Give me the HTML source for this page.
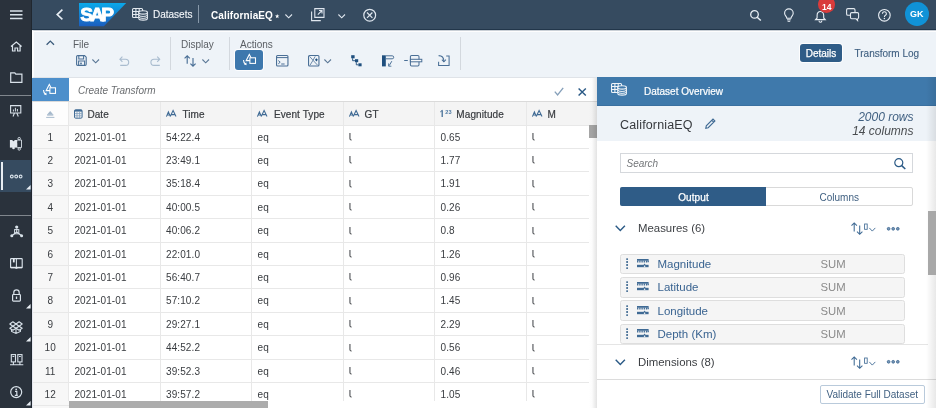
<!DOCTYPE html>
<html><head><meta charset="utf-8">
<style>
*{box-sizing:border-box;}
html,body{margin:0;padding:0;}
body{width:936px;height:408px;overflow:hidden;position:relative;background:#fff;font-family:"Liberation Sans",sans-serif;color:#32363a;}
.a{position:absolute;}
.t{position:absolute;white-space:nowrap;line-height:1;}
svg{position:absolute;overflow:visible;}
#side{left:0;top:0;width:32px;height:408px;background:#2a323c;}
#shell{left:32px;top:0;width:904px;height:30px;background:#364b60;border-bottom:1px solid #22364a;}
#tb{left:32px;top:30px;width:904px;height:48px;background:#eef3f8;border-top:1px solid #c9cfd6;border-left:2px solid #fbfcfd;border-bottom:1px solid #dfe3e8;box-shadow:inset 0 1px 0 #fdfdfe;}
.lbl{font-size:10px;color:#5a5e63;}
.sep{position:absolute;width:1px;background:#d3d8de;}
.cell{position:absolute;font-size:10px;color:#393c40;letter-spacing:0.1px;}
</style></head><body>
<div id="root" class="a" style="left:0;top:0;width:936px;height:408px;overflow:hidden;background:#fff;will-change:transform">

<!-- SIDEBAR -->
<div id="side" class="a"></div>
<div class="a" style="left:31px;top:0;width:1px;height:408px;background:#20272f"></div>
<div class="a" style="left:0;top:95px;width:31px;height:1px;background:#80868d"></div>
<div class="a" style="left:0;top:215px;width:31px;height:1px;background:#80868d"></div>
<div class="a" style="left:0;top:160px;width:31px;height:31.6px;background:#364b60"></div>
<div class="a" style="left:1.2px;top:162px;width:1.5px;height:27.5px;background:#e8eef4"></div>
<!-- hamburger -->
<svg style="left:10px;top:10px" width="13" height="10"><path d="M0 1h12.5M0 4.8h12.5M0 8.6h12.5" stroke="#d9e2ea" stroke-width="1.5"/></svg>
<!-- home -->
<svg style="left:10px;top:41px" width="13" height="11"><path d="M1 5.5L6.3 1 11.6 5.5M2.5 4.5V10H5V7h2.6v3h2.5V4.5" fill="none" stroke="#d9e2ea" stroke-width="1.2"/></svg>
<!-- folder -->
<svg style="left:10px;top:72px" width="13" height="11"><path d="M0.7 0.8H4.8L5.8 2.2H11.9V10.3H0.7Z" fill="none" stroke="#d9e2ea" stroke-width="1.2"/></svg>
<!-- presentation -->
<svg style="left:10px;top:105px" width="12" height="12"><path d="M0.6 0.6H10.8V8H0.6ZM3 11.5L4.5 8M8.3 11.5L6.8 8" fill="none" stroke="#d9e2ea" stroke-width="1.1"/><path d="M3.4 6.5V4.5M5.4 6.5V2.8M7.4 6.5V4" stroke="#d9e2ea" stroke-width="1"/></svg>
<!-- puzzle -->
<svg style="left:9px;top:137px" width="14" height="14"><rect x="0.9" y="3" width="7.4" height="7.6" fill="#e3e9ef"/><circle cx="4.5" cy="3.1" r="1.1" fill="#2a323c"/><circle cx="4.5" cy="11" r="1.3" fill="#e3e9ef"/><path d="M8.3 3H12.5V10.6H8.3" fill="none" stroke="#d9e2ea" stroke-width="0.9"/><circle cx="10.2" cy="1.6" r="1.2" fill="none" stroke="#d9e2ea" stroke-width="0.9"/><circle cx="10.2" cy="12" r="1.2" fill="none" stroke="#d9e2ea" stroke-width="0.9"/><rect x="8.6" y="4.5" width="1.6" height="1.6" fill="#2a323c"/><rect x="10" y="7.2" width="1.6" height="1.6" fill="#2a323c"/></svg>
<!-- ellipsis -->
<svg style="left:10px;top:173.5px" width="13" height="6"><circle cx="1.8" cy="2.5" r="1.4" fill="none" stroke="#d9e2ea" stroke-width="1.1"/><circle cx="6.2" cy="2.5" r="1.4" fill="none" stroke="#d9e2ea" stroke-width="1.1"/><circle cx="10.6" cy="2.5" r="1.4" fill="none" stroke="#d9e2ea" stroke-width="1.1"/></svg>
<svg style="left:25.5px;top:184.8px" width="5" height="5"><path d="M4.6 0V4.6H0Z" fill="#e8eef4"/></svg>
<!-- network -->
<svg style="left:9.5px;top:224.8px" width="14" height="13"><circle cx="6.7" cy="2" r="1.6" fill="#d9e2ea"/><circle cx="1.8" cy="10.8" r="1.5" fill="#d9e2ea"/><circle cx="11.6" cy="10.8" r="1.5" fill="#d9e2ea"/><path d="M6.7 3.5V7M6.7 7L1.8 10.8M6.7 7L11.6 10.8" stroke="#d9e2ea" stroke-width="1.1"/><rect x="4.6" y="4.6" width="4.2" height="4.2" fill="none" stroke="#d9e2ea" stroke-width="1"/></svg>
<!-- book -->
<svg style="left:9.5px;top:257.5px" width="13" height="11"><rect x="0.6" y="0.6" width="11.6" height="9" rx="0.6" fill="none" stroke="#d9e2ea" stroke-width="1.15"/><path d="M6.4 0.6V9.6" stroke="#d9e2ea" stroke-width="1.05"/><path d="M0.6 9.5H12.2" stroke="#e3e9ef" stroke-width="1.4"/><rect x="2.9" y="0.6" width="1.8" height="3.8" fill="#e8eef4"/><path d="M5.4 10.4H7.4" stroke="#d9e2ea" stroke-width="0.9"/></svg>
<!-- lock -->
<svg style="left:11.5px;top:288.5px" width="9" height="13"><path d="M1.8 5.5V3.5a2.7 2.7 0 0 1 5.4 0V5.5" fill="none" stroke="#d9e2ea" stroke-width="1.2"/><rect x="0.6" y="5.5" width="7.8" height="6.6" rx="0.8" fill="none" stroke="#d9e2ea" stroke-width="1.2"/><path d="M4.5 7.5V10" stroke="#d9e2ea" stroke-width="1.3"/></svg>
<svg style="left:26px;top:303.5px" width="5" height="5"><path d="M4.6 0V4.6H0Z" fill="#e8eef4"/></svg>
<!-- box -->
<svg style="left:9px;top:320.5px" width="14" height="13"><path d="M0.8 3L3.9 0.8 7 3 10.1 0.8 13.2 3 10.1 5.2 13.2 7.2 10.1 9.2 7 7.2 3.9 9.2 0.8 7.2 3.9 5.2Z M3.9 5.2L7 3 10.1 5.2 7 7.2Z" fill="none" stroke="#d9e2ea" stroke-width="1.1" stroke-linejoin="round"/><path d="M2.6 8.4V10.4L7 12.5 11.4 10.4V8.4M7 7.2V12.5" fill="none" stroke="#d9e2ea" stroke-width="1.1"/></svg>
<svg style="left:26px;top:336.5px" width="5" height="5"><path d="M4.6 0V4.6H0Z" fill="#e8eef4"/></svg>
<!-- server -->
<svg style="left:9.5px;top:354px" width="14" height="12"><rect x="1.3" y="0.6" width="4.2" height="7.3" fill="none" stroke="#d9e2ea" stroke-width="1.1"/><rect x="7.8" y="0.6" width="4.2" height="7.3" fill="none" stroke="#d9e2ea" stroke-width="1.1"/><path d="M2.5 2.5h1.8M9 2.5h1.8M3.4 8V10.5M9.9 8V10.5M0 10.8H13.3" stroke="#d9e2ea" stroke-width="1.1"/></svg>
<!-- info -->
<svg style="left:10px;top:386px" width="13" height="13"><circle cx="6.2" cy="6.1" r="5.5" fill="none" stroke="#d9e2ea" stroke-width="1.2"/><circle cx="6.2" cy="3.3" r="0.9" fill="#d9e2ea"/><path d="M5 5.3H6.8V9.3M4.8 9.3H7.8" fill="none" stroke="#d9e2ea" stroke-width="1.2"/></svg>
<svg style="left:26px;top:400.5px" width="5" height="5"><path d="M4.6 0V4.6H0Z" fill="#e8eef4"/></svg>

<!-- SHELL BAR -->
<div id="shell" class="a"></div>
<svg style="left:56.3px;top:9.2px" width="8" height="12"><path d="M6.4 0.7L1.2 5.55 6.4 10.4" fill="none" stroke="#e8eef4" stroke-width="1.6"/></svg>
<svg style="left:79px;top:2.7px" width="48" height="24"><defs><linearGradient id="sapg" x1="0" y1="0" x2="0" y2="1"><stop offset="0" stop-color="#0aa9ea"/><stop offset="1" stop-color="#1b5ebf"/></linearGradient></defs><path d="M0 0H47.2L24.9 23.2H0Z" fill="url(#sapg)"/><text x="1.2" y="18.2" font-family="Liberation Sans" font-weight="bold" font-size="19.2" fill="#fff" stroke="#fff" stroke-width="0.9" letter-spacing="-2.8">SAP</text></svg>
<!-- datasets icon -->
<svg style="left:131.5px;top:7.5px" width="17" height="13"><rect x="0.55" y="0.55" width="10" height="9" rx="1" fill="none" stroke="#e3e9ef" stroke-width="1.1"/><path d="M3.9 0.6V9.5M7.2 0.6V9.5M0.6 3.5H10.5M0.6 6.5H10.5" stroke="#e3e9ef" stroke-width="1.1"/><path d="M6.8 4.4V10.4A4.3 1.7 0 0 0 15.4 10.4V4.4Z" fill="#364b60" stroke="#e3e9ef" stroke-width="1.1"/><ellipse cx="11.1" cy="4.4" rx="4.3" ry="1.7" fill="#364b60" stroke="#e3e9ef" stroke-width="1.1"/><path d="M6.8 6.8A4.3 1.7 0 0 0 15.4 6.8M6.8 8.7A4.3 1.7 0 0 0 15.4 8.7" fill="none" stroke="#e3e9ef" stroke-width="1"/></svg>
<div class="t" style="left:153px;top:10px;font-size:10px;color:#f4f7fa;-webkit-text-stroke:0.12px #f4f7fa">Datasets</div>
<div class="a" style="left:198px;top:5px;width:1px;height:18px;background:#8899aa"></div>
<div class="t" style="left:211px;top:10.5px;font-size:10px;font-weight:bold;color:#fff;letter-spacing:0.12px">CaliforniaEQ</div>
<svg style="left:274.5px;top:13.8px" width="5" height="5"><path d="M2.2 0L2.8 1.6 4.4 1.6 3.1 2.6 3.6 4.2 2.2 3.2 0.8 4.2 1.3 2.6 0 1.6 1.6 1.6Z" fill="#fff"/></svg>
<svg style="left:285px;top:14px" width="8" height="5"><path d="M0.4 0.5L3.7 3.8 7 0.5" fill="none" stroke="#dfe6ee" stroke-width="1.1"/></svg>
<svg style="left:310.5px;top:8px" width="14" height="14"><path d="M3.8 0.6H13V9.4H3.8Z" fill="none" stroke="#dfe6ee" stroke-width="1.1"/><path d="M0.6 3.6V12.6H9.8" fill="none" stroke="#dfe6ee" stroke-width="1.1"/><path d="M6.8 6.6L11 2.5M8 2.5H11V5.5" fill="none" stroke="#dfe6ee" stroke-width="1.1"/></svg>
<svg style="left:337.5px;top:14px" width="8" height="5"><path d="M0.4 0.5L3.7 3.8 7 0.5" fill="none" stroke="#dfe6ee" stroke-width="1.1"/></svg>
<svg style="left:363px;top:9px" width="14" height="14"><circle cx="6.7" cy="6.2" r="5.9" fill="none" stroke="#dfe6ee" stroke-width="1.2"/><path d="M4 3.5L9.4 8.9M9.4 3.5L4 8.9" stroke="#dfe6ee" stroke-width="1.2"/></svg>
<!-- right icons -->
<svg style="left:750px;top:10px" width="12" height="11"><circle cx="4.5" cy="4.4" r="3.8" fill="none" stroke="#e8eef4" stroke-width="1.3"/><path d="M7.2 7.2L10.8 10.5" stroke="#e8eef4" stroke-width="1.5"/></svg>
<svg style="left:783.5px;top:8.5px" width="10" height="13"><path d="M2.8 9.3C2.8 7.5 0.6 6.6 0.6 4.2a4.3 4.3 0 0 1 8.6 0C9.2 6.6 7 7.5 7 9.3Z" fill="none" stroke="#e8eef4" stroke-width="1.1"/><path d="M3 10.8H6.8M3.6 12.3H6.2" stroke="#e8eef4" stroke-width="1"/></svg>
<svg style="left:815px;top:9.5px" width="12" height="12"><path d="M5.4 1.5C3 1.5 2.1 3.5 2.1 5.6V8L0.6 9.6H10.2L8.7 8V5.6C8.7 3.5 7.8 1.5 5.4 1.5ZM4 10.8a1.4 1.4 0 0 0 2.8 0" fill="none" stroke="#e8eef4" stroke-width="1.1"/></svg>
<div class="a" style="left:817.6px;top:-4.3px;width:17.6px;height:17.1px;border-radius:50%;background:#d93b3b"></div>
<div class="t" style="left:818px;top:2.5px;width:17.5px;text-align:center;font-size:8.5px;font-weight:bold;color:#fff">14</div>
<svg style="left:846px;top:8px" width="14" height="14"><rect x="0.6" y="0.6" width="8.4" height="6.6" rx="1.3" fill="none" stroke="#e3e9ef" stroke-width="1.1"/><path d="M5.7 4.6H11.4a1.2 1.2 0 0 1 1.2 1.2V9.6a1.2 1.2 0 0 1-1.2 1.2H11.5L11.6 12.5 10 10.8H5.7a1.2 1.2 0 0 1-1.2-1.2V5.8a1.2 1.2 0 0 1 1.2-1.2Z" fill="#364b60" stroke="#e3e9ef" stroke-width="1.1"/></svg>
<svg style="left:878px;top:9px" width="14" height="13"><circle cx="6.4" cy="6.3" r="5.8" fill="none" stroke="#e8eef4" stroke-width="1.1"/><path d="M4.4 4.8a2 2 0 1 1 2.8 1.8c-.6.3-.8.7-.8 1.4" fill="none" stroke="#e8eef4" stroke-width="1.1"/><circle cx="6.4" cy="9.6" r="0.75" fill="#e8eef4"/></svg>
<div class="a" style="left:904.9px;top:2.4px;width:23.8px;height:23.8px;border-radius:50%;background:#1092d7"></div>
<div class="t" style="left:904.9px;top:10.4px;width:23.8px;text-align:center;font-size:9px;font-weight:bold;color:#fff">GK</div>

<!-- TOOLBAR -->
<div id="tb" class="a"></div>
<svg style="left:45.8px;top:39.8px" width="9" height="6"><path d="M0.6 4.8L4.3 1.1 8 4.8" fill="none" stroke="#3a5a7a" stroke-width="1.3"/></svg>
<div class="t lbl" style="left:73px;top:40px">File</div>
<svg style="left:76px;top:55px" width="11" height="11"><path d="M1.7 0.6H8.6L10.2 2.2V9.3a1.1 1.1 0 0 1-1.1 1.1H1.7a1.1 1.1 0 0 1-1.1-1.1V1.7a1.1 1.1 0 0 1 1.1-1.1Z" fill="none" stroke="#4a6f96" stroke-width="1.1"/><path d="M2.8 0.8V4H7.6V0.8M2.6 10.2V6H8.6V10.2" fill="none" stroke="#4a6f96" stroke-width="1.05"/><rect x="4.2" y="7.6" width="1.6" height="1.8" fill="#4a6f96"/></svg>
<svg style="left:92px;top:58.5px" width="8" height="5"><path d="M0.4 0.5L3.7 3.8 7 0.5" fill="none" stroke="#5b7896" stroke-width="1.1"/></svg>
<svg style="left:119px;top:55.5px" width="11" height="11"><path d="M3.4 0.6L0.9 3.2 3.4 5.8M0.9 3.2H6.6a3.1 3.1 0 0 1 0 6.2H1.2" fill="none" stroke="#a9bccf" stroke-width="1.1"/></svg>
<svg style="left:149.5px;top:55.5px" width="11" height="11"><path d="M7.2 0.6L9.7 3.2 7.2 5.8M9.7 3.2H4a3.1 3.1 0 0 0 0 6.2H9.8" fill="none" stroke="#a9bccf" stroke-width="1.1"/></svg>
<div class="sep" style="left:170px;top:37px;height:33px"></div>
<div class="t lbl" style="left:181px;top:40px">Display</div>
<svg style="left:184px;top:54.5px" width="13" height="12"><path d="M3.2 8.8V0.8M0.6 3.4L3.2 0.8 5.8 3.4M9 3V11.2M6.4 8.6L9 11.2 11.6 8.6" fill="none" stroke="#4a6f96" stroke-width="1.15"/></svg>
<svg style="left:201.5px;top:58.5px" width="8" height="5"><path d="M0.4 0.5L3.7 3.8 7 0.5" fill="none" stroke="#5b7896" stroke-width="1.1"/></svg>
<div class="sep" style="left:229px;top:37px;height:33px"></div>
<div class="t lbl" style="left:240px;top:40px">Actions</div>
<div class="a" style="left:235.2px;top:50.2px;width:27.6px;height:20px;border-radius:3px;background:#3d78ad;box-shadow:0 0 0 1px #fdfdfe"></div>
<svg style="left:242px;top:54px" width="14" height="13"><path d="M4.2 6.6L7.3 0.4 10.6 6.6Z" fill="none" stroke="#fff" stroke-width="1.05"/><rect x="7.9" y="3.8" width="5.6" height="5.6" fill="#3d78ad" stroke="#fff" stroke-width="1.05"/><path d="M1.5 6C1.5 7.8 2.2 9.3 3.6 10.2" fill="none" stroke="#fff" stroke-width="1.1"/><path d="M1.8 10.3L4.6 11.2 4.4 8.4Z" fill="#fff"/></svg>
<svg style="left:275.5px;top:54.5px" width="13" height="12"><rect x="0.55" y="0.55" width="11.4" height="10.4" rx="1" fill="none" stroke="#4a6f96" stroke-width="1.1"/><path d="M0.6 2.6H12M2.3 5.6L4.2 7.2 2.3 8.8M5.2 9H8.6" fill="none" stroke="#4a6f96" stroke-width="1"/></svg>
<svg style="left:307.5px;top:54.5px" width="12" height="12"><rect x="0.55" y="0.55" width="10.4" height="10.4" rx="1" fill="none" stroke="#4a6f96" stroke-width="1.1"/><path d="M1.6 1.4L5 5.3 2 10.2M5 5.3L7.2 1.4M5 5.3L9.6 10.2" fill="none" stroke="#4a6f96" stroke-width="0.8"/><path d="M8.4 3.2L9.8 4.8 8.4 6.4 7 4.8Z" fill="#1f4f7e"/></svg>
<svg style="left:324px;top:58.5px" width="8" height="5"><path d="M0.4 0.5L3.7 3.8 7 0.5" fill="none" stroke="#5b7896" stroke-width="1.1"/></svg>
<svg style="left:351px;top:54.7px" width="12" height="12"><rect x="0.2" y="0.2" width="3.4" height="3.1" fill="#1f4f7e"/><rect x="4" y="4.2" width="3.2" height="3" fill="#1f4f7e"/><rect x="7.4" y="8.3" width="3.2" height="3" fill="#1f4f7e"/><path d="M1.6 3.2V5.7H4M5.3 7.1V9.8H7.4" fill="none" stroke="#1f4f7e" stroke-width="0.9"/></svg>
<svg style="left:382px;top:54.5px" width="12" height="12"><rect x="0" y="0.3" width="3.8" height="11.1" fill="#1f4f7e"/><path d="M3.8 0.8H10.2a1.5 1.5 0 0 1 0 3H3.8" fill="none" stroke="#4a6f96" stroke-width="1"/><path d="M9.8 6.2L7.2 10.6" fill="none" stroke="#4a6f96" stroke-width="1"/><path d="M6.6 8.4V11.2H9.4" fill="none" stroke="#4a6f96" stroke-width="0.9"/></svg>
<svg style="left:404px;top:55px" width="19" height="12"><path d="M0.2 5.5H3.8" stroke="#4a6f96" stroke-width="1"/><rect x="6.4" y="0.5" width="8.6" height="10.4" rx="1.2" fill="none" stroke="#4a6f96" stroke-width="1.05"/><rect x="6.4" y="4.3" width="11.4" height="2.5" fill="#f6f8fb" stroke="#4a6f96" stroke-width="1"/></svg>
<svg style="left:438.3px;top:55px" width="13" height="12"><path d="M0.6 6.8V10.5H11.1V1H8.2" fill="none" stroke="#4a6f96" stroke-width="1.05"/><path d="M0.6 0.6C3.6 0.6 5.8 2.6 5.9 6.3" fill="none" stroke="#4a6f96" stroke-width="1.05"/><path d="M3.9 4.6L5.9 6.8 7.9 4.6" fill="none" stroke="#4a6f96" stroke-width="1.05"/></svg>
<div class="sep" style="left:460px;top:37px;height:33px"></div>
<div class="a" style="left:799.7px;top:43.7px;width:42.6px;height:18.8px;border-radius:3px;background:#2f5c87;box-shadow:0 0 0 1px #fdfdfe"></div>
<div class="t" style="left:799.5px;top:49px;width:43px;text-align:center;font-size:10px;color:#fff;-webkit-text-stroke:0.25px #fff">Details</div>
<div class="t" style="left:854.5px;top:49px;font-size:10px;color:#3f5f80;-webkit-text-stroke:0.12px #3f5f80">Transform Log</div>

<!-- CREATE TRANSFORM BAR -->
<div class="a" style="left:32px;top:78px;width:565px;height:24px;background:#fff;border-bottom:1px solid #dadada"></div>
<div class="a" style="left:32px;top:78px;width:36.6px;height:23.4px;background:#4d8fcb"></div>
<svg style="left:42px;top:84px" width="14" height="13"><path d="M4.2 6.6L7.3 0.4 10.6 6.6Z" fill="none" stroke="#fff" stroke-width="1.05"/><rect x="7.9" y="3.8" width="5.6" height="5.6" fill="#4d8fcb" stroke="#fff" stroke-width="1.05"/><path d="M1.5 6C1.5 7.8 2.2 9.3 3.6 10.2" fill="none" stroke="#fff" stroke-width="1.1"/><path d="M1.8 10.3L4.6 11.2 4.4 8.4Z" fill="#fff"/></svg>
<div class="t" style="left:78px;top:85.5px;font-size:10px;font-style:italic;color:#6a6d70">Create Transform</div>
<svg style="left:553.5px;top:87px" width="10" height="10"><path d="M0.8 4.6L3.6 8 9.2 0.8" fill="none" stroke="#86a0ba" stroke-width="1.35"/></svg>
<svg style="left:577.8px;top:87.5px" width="10" height="9"><path d="M0.6 0.6L7.8 7.6M7.8 0.6L0.6 7.6" fill="none" stroke="#2b5a86" stroke-width="1.45"/></svg>

<!-- TABLE -->
<div class="a" style="left:32px;top:101.5px;width:565px;height:23.5px;background:#f4f4f4"></div>
<div class="a" style="left:32px;top:101.5px;width:36.4px;height:23.5px;background:#fdfdfd"></div>
<div class="a" style="left:32px;top:125.0px;width:36.5px;height:283.0px;background:#f7f7f7"></div>
<div class="a" style="left:32px;top:124.50px;width:557px;height:1px;background:#e8e8e8"></div>
<div class="a" style="left:32px;top:147.90px;width:557px;height:1px;background:#e8e8e8"></div>
<div class="a" style="left:32px;top:171.30px;width:557px;height:1px;background:#e8e8e8"></div>
<div class="a" style="left:32px;top:194.70px;width:557px;height:1px;background:#e8e8e8"></div>
<div class="a" style="left:32px;top:218.10px;width:557px;height:1px;background:#e8e8e8"></div>
<div class="a" style="left:32px;top:241.50px;width:557px;height:1px;background:#e8e8e8"></div>
<div class="a" style="left:32px;top:264.90px;width:557px;height:1px;background:#e8e8e8"></div>
<div class="a" style="left:32px;top:288.30px;width:557px;height:1px;background:#e8e8e8"></div>
<div class="a" style="left:32px;top:311.70px;width:557px;height:1px;background:#e8e8e8"></div>
<div class="a" style="left:32px;top:335.10px;width:557px;height:1px;background:#e8e8e8"></div>
<div class="a" style="left:32px;top:358.50px;width:557px;height:1px;background:#e8e8e8"></div>
<div class="a" style="left:32px;top:381.90px;width:557px;height:1px;background:#e8e8e8"></div>
<div class="a" style="left:32px;top:405.30px;width:557px;height:1px;background:#e8e8e8"></div>
<div class="a" style="left:67.90px;top:101.5px;width:1px;height:299.5px;background:#e8e8e8"></div>
<div class="a" style="left:159.50px;top:101.5px;width:1px;height:299.5px;background:#e8e8e8"></div>
<div class="a" style="left:251.00px;top:101.5px;width:1px;height:299.5px;background:#e8e8e8"></div>
<div class="a" style="left:342.50px;top:101.5px;width:1px;height:299.5px;background:#e8e8e8"></div>
<div class="a" style="left:434.00px;top:101.5px;width:1px;height:299.5px;background:#e8e8e8"></div>
<div class="a" style="left:525.50px;top:101.5px;width:1px;height:299.5px;background:#e8e8e8"></div>
<svg style="left:45.8px;top:111px" width="9" height="8"><path d="M4.2 0L7 3.2H1.4Z" fill="#a6b9cc"/><path d="M1.1 3.9H7.3" stroke="#a6b9cc" stroke-width="1.4"/><path d="M0.2 6.4H8.4" stroke="#9fb3c7" stroke-width="0.9"/></svg>
<svg style="left:74.2px;top:109.3px" width="9" height="10"><rect x="0.5" y="0.8" width="7.6" height="8.4" rx="1.2" fill="none" stroke="#3f6a94" stroke-width="1"/><path d="M0.6 0.8H8V2.6H0.6Z" fill="#3f6a94"/><path d="M0.8 4.6H7.8M0.8 6.8H7.8M3 2.8V9M5.6 2.8V9" stroke="#7f9dbb" stroke-width="0.8"/></svg>
<div class="t cell" style="left:87.4px;top:109.8px;-webkit-text-stroke:0.2px #393c40">Date</div>
<svg style="left:165.6px;top:110px" width="11" height="7"><path d="M0.4 6.6L2.4 1.8 4.4 6.6M1.2 4.9H3.6M4.2 6.6L7.1 0.5 10 6.6M5.3 4.6H8.9" fill="none" stroke="#3f6a94" stroke-width="1.05"/></svg>
<div class="t cell" style="left:182.4px;top:109.8px;-webkit-text-stroke:0.2px #393c40">Time</div>
<svg style="left:257.1px;top:110px" width="11" height="7"><path d="M0.4 6.6L2.4 1.8 4.4 6.6M1.2 4.9H3.6M4.2 6.6L7.1 0.5 10 6.6M5.3 4.6H8.9" fill="none" stroke="#3f6a94" stroke-width="1.05"/></svg>
<div class="t cell" style="left:273.9px;top:109.8px;-webkit-text-stroke:0.2px #393c40">Event Type</div>
<svg style="left:348.6px;top:110px" width="11" height="7"><path d="M0.4 6.6L2.4 1.8 4.4 6.6M1.2 4.9H3.6M4.2 6.6L7.1 0.5 10 6.6M5.3 4.6H8.9" fill="none" stroke="#3f6a94" stroke-width="1.05"/></svg>
<div class="t cell" style="left:364.6px;top:109.8px;-webkit-text-stroke:0.2px #393c40">GT</div>
<svg style="left:440.1px;top:110.2px" width="4" height="8"><path d="M2.2 0.3V6.9" stroke="#3f6a94" stroke-width="1.25"/><path d="M0.3 1.9L2.3 0.4" stroke="#3f6a94" stroke-width="1"/></svg><div class="t" style="left:445.3px;top:109.9px;font-size:5.6px;font-weight:bold;color:#4f7aa3">23</div>
<div class="t cell" style="left:456.3px;top:109.8px;-webkit-text-stroke:0.2px #393c40">Magnitude</div>
<svg style="left:531.6px;top:110px" width="11" height="7"><path d="M0.4 6.6L2.4 1.8 4.4 6.6M1.2 4.9H3.6M4.2 6.6L7.1 0.5 10 6.6M5.3 4.6H8.9" fill="none" stroke="#3f6a94" stroke-width="1.05"/></svg>
<div class="t cell" style="left:547.5px;top:109.8px;-webkit-text-stroke:0.2px #393c40">M</div>
<div class="t cell" style="left:32px;width:36.5px;text-align:center;top:132.50px">1</div>
<div class="t cell" style="left:74.4px;top:132.50px">2021-01-01</div>
<div class="t cell" style="left:166.0px;top:132.50px">54:22.4</div>
<div class="t cell" style="left:257.5px;top:132.50px">eq</div>
<svg style="left:348.6px;top:132.90px" width="4" height="8"><path d="M0.95 0V5.6C0.95 6.6 1.4 7 2.6 6.9" fill="none" stroke="#45484c" stroke-width="1.05"/></svg>
<div class="t cell" style="left:440.5px;top:132.50px">0.65</div>
<svg style="left:531.6px;top:132.90px" width="4" height="8"><path d="M0.95 0V5.6C0.95 6.6 1.4 7 2.6 6.9" fill="none" stroke="#45484c" stroke-width="1.05"/></svg>
<div class="t cell" style="left:32px;width:36.5px;text-align:center;top:155.90px">2</div>
<div class="t cell" style="left:74.4px;top:155.90px">2021-01-01</div>
<div class="t cell" style="left:166.0px;top:155.90px">23:49.1</div>
<div class="t cell" style="left:257.5px;top:155.90px">eq</div>
<svg style="left:348.6px;top:156.30px" width="4" height="8"><path d="M0.95 0V5.6C0.95 6.6 1.4 7 2.6 6.9" fill="none" stroke="#45484c" stroke-width="1.05"/></svg>
<div class="t cell" style="left:440.5px;top:155.90px">1.77</div>
<svg style="left:531.6px;top:156.30px" width="4" height="8"><path d="M0.95 0V5.6C0.95 6.6 1.4 7 2.6 6.9" fill="none" stroke="#45484c" stroke-width="1.05"/></svg>
<div class="t cell" style="left:32px;width:36.5px;text-align:center;top:179.30px">3</div>
<div class="t cell" style="left:74.4px;top:179.30px">2021-01-01</div>
<div class="t cell" style="left:166.0px;top:179.30px">35:18.4</div>
<div class="t cell" style="left:257.5px;top:179.30px">eq</div>
<svg style="left:348.6px;top:179.70px" width="4" height="8"><path d="M0.95 0V5.6C0.95 6.6 1.4 7 2.6 6.9" fill="none" stroke="#45484c" stroke-width="1.05"/></svg>
<div class="t cell" style="left:440.5px;top:179.30px">1.91</div>
<svg style="left:531.6px;top:179.70px" width="4" height="8"><path d="M0.95 0V5.6C0.95 6.6 1.4 7 2.6 6.9" fill="none" stroke="#45484c" stroke-width="1.05"/></svg>
<div class="t cell" style="left:32px;width:36.5px;text-align:center;top:202.70px">4</div>
<div class="t cell" style="left:74.4px;top:202.70px">2021-01-01</div>
<div class="t cell" style="left:166.0px;top:202.70px">40:00.5</div>
<div class="t cell" style="left:257.5px;top:202.70px">eq</div>
<svg style="left:348.6px;top:203.10px" width="4" height="8"><path d="M0.95 0V5.6C0.95 6.6 1.4 7 2.6 6.9" fill="none" stroke="#45484c" stroke-width="1.05"/></svg>
<div class="t cell" style="left:440.5px;top:202.70px">0.26</div>
<svg style="left:531.6px;top:203.10px" width="4" height="8"><path d="M0.95 0V5.6C0.95 6.6 1.4 7 2.6 6.9" fill="none" stroke="#45484c" stroke-width="1.05"/></svg>
<div class="t cell" style="left:32px;width:36.5px;text-align:center;top:226.10px">5</div>
<div class="t cell" style="left:74.4px;top:226.10px">2021-01-01</div>
<div class="t cell" style="left:166.0px;top:226.10px">40:06.2</div>
<div class="t cell" style="left:257.5px;top:226.10px">eq</div>
<svg style="left:348.6px;top:226.50px" width="4" height="8"><path d="M0.95 0V5.6C0.95 6.6 1.4 7 2.6 6.9" fill="none" stroke="#45484c" stroke-width="1.05"/></svg>
<div class="t cell" style="left:440.5px;top:226.10px">0.8</div>
<svg style="left:531.6px;top:226.50px" width="4" height="8"><path d="M0.95 0V5.6C0.95 6.6 1.4 7 2.6 6.9" fill="none" stroke="#45484c" stroke-width="1.05"/></svg>
<div class="t cell" style="left:32px;width:36.5px;text-align:center;top:249.50px">6</div>
<div class="t cell" style="left:74.4px;top:249.50px">2021-01-01</div>
<div class="t cell" style="left:166.0px;top:249.50px">22:01.0</div>
<div class="t cell" style="left:257.5px;top:249.50px">eq</div>
<svg style="left:348.6px;top:249.90px" width="4" height="8"><path d="M0.95 0V5.6C0.95 6.6 1.4 7 2.6 6.9" fill="none" stroke="#45484c" stroke-width="1.05"/></svg>
<div class="t cell" style="left:440.5px;top:249.50px">1.26</div>
<svg style="left:531.6px;top:249.90px" width="4" height="8"><path d="M0.95 0V5.6C0.95 6.6 1.4 7 2.6 6.9" fill="none" stroke="#45484c" stroke-width="1.05"/></svg>
<div class="t cell" style="left:32px;width:36.5px;text-align:center;top:272.90px">7</div>
<div class="t cell" style="left:74.4px;top:272.90px">2021-01-01</div>
<div class="t cell" style="left:166.0px;top:272.90px">56:40.7</div>
<div class="t cell" style="left:257.5px;top:272.90px">eq</div>
<svg style="left:348.6px;top:273.30px" width="4" height="8"><path d="M0.95 0V5.6C0.95 6.6 1.4 7 2.6 6.9" fill="none" stroke="#45484c" stroke-width="1.05"/></svg>
<div class="t cell" style="left:440.5px;top:272.90px">0.96</div>
<svg style="left:531.6px;top:273.30px" width="4" height="8"><path d="M0.95 0V5.6C0.95 6.6 1.4 7 2.6 6.9" fill="none" stroke="#45484c" stroke-width="1.05"/></svg>
<div class="t cell" style="left:32px;width:36.5px;text-align:center;top:296.30px">8</div>
<div class="t cell" style="left:74.4px;top:296.30px">2021-01-01</div>
<div class="t cell" style="left:166.0px;top:296.30px">57:10.2</div>
<div class="t cell" style="left:257.5px;top:296.30px">eq</div>
<svg style="left:348.6px;top:296.70px" width="4" height="8"><path d="M0.95 0V5.6C0.95 6.6 1.4 7 2.6 6.9" fill="none" stroke="#45484c" stroke-width="1.05"/></svg>
<div class="t cell" style="left:440.5px;top:296.30px">1.45</div>
<svg style="left:531.6px;top:296.70px" width="4" height="8"><path d="M0.95 0V5.6C0.95 6.6 1.4 7 2.6 6.9" fill="none" stroke="#45484c" stroke-width="1.05"/></svg>
<div class="t cell" style="left:32px;width:36.5px;text-align:center;top:319.70px">9</div>
<div class="t cell" style="left:74.4px;top:319.70px">2021-01-01</div>
<div class="t cell" style="left:166.0px;top:319.70px">29:27.1</div>
<div class="t cell" style="left:257.5px;top:319.70px">eq</div>
<svg style="left:348.6px;top:320.10px" width="4" height="8"><path d="M0.95 0V5.6C0.95 6.6 1.4 7 2.6 6.9" fill="none" stroke="#45484c" stroke-width="1.05"/></svg>
<div class="t cell" style="left:440.5px;top:319.70px">2.29</div>
<svg style="left:531.6px;top:320.10px" width="4" height="8"><path d="M0.95 0V5.6C0.95 6.6 1.4 7 2.6 6.9" fill="none" stroke="#45484c" stroke-width="1.05"/></svg>
<div class="t cell" style="left:32px;width:36.5px;text-align:center;top:343.10px">10</div>
<div class="t cell" style="left:74.4px;top:343.10px">2021-01-01</div>
<div class="t cell" style="left:166.0px;top:343.10px">44:52.2</div>
<div class="t cell" style="left:257.5px;top:343.10px">eq</div>
<svg style="left:348.6px;top:343.50px" width="4" height="8"><path d="M0.95 0V5.6C0.95 6.6 1.4 7 2.6 6.9" fill="none" stroke="#45484c" stroke-width="1.05"/></svg>
<div class="t cell" style="left:440.5px;top:343.10px">0.56</div>
<svg style="left:531.6px;top:343.50px" width="4" height="8"><path d="M0.95 0V5.6C0.95 6.6 1.4 7 2.6 6.9" fill="none" stroke="#45484c" stroke-width="1.05"/></svg>
<div class="t cell" style="left:32px;width:36.5px;text-align:center;top:366.50px">11</div>
<div class="t cell" style="left:74.4px;top:366.50px">2021-01-01</div>
<div class="t cell" style="left:166.0px;top:366.50px">39:52.3</div>
<div class="t cell" style="left:257.5px;top:366.50px">eq</div>
<svg style="left:348.6px;top:366.90px" width="4" height="8"><path d="M0.95 0V5.6C0.95 6.6 1.4 7 2.6 6.9" fill="none" stroke="#45484c" stroke-width="1.05"/></svg>
<div class="t cell" style="left:440.5px;top:366.50px">0.46</div>
<svg style="left:531.6px;top:366.90px" width="4" height="8"><path d="M0.95 0V5.6C0.95 6.6 1.4 7 2.6 6.9" fill="none" stroke="#45484c" stroke-width="1.05"/></svg>
<div class="t cell" style="left:32px;width:36.5px;text-align:center;top:389.90px">12</div>
<div class="t cell" style="left:74.4px;top:389.90px">2021-01-01</div>
<div class="t cell" style="left:166.0px;top:389.90px">39:57.2</div>
<div class="t cell" style="left:257.5px;top:389.90px">eq</div>
<svg style="left:348.6px;top:390.30px" width="4" height="8"><path d="M0.95 0V5.6C0.95 6.6 1.4 7 2.6 6.9" fill="none" stroke="#45484c" stroke-width="1.05"/></svg>
<div class="t cell" style="left:440.5px;top:389.90px">1.05</div>
<svg style="left:531.6px;top:390.30px" width="4" height="8"><path d="M0.95 0V5.6C0.95 6.6 1.4 7 2.6 6.9" fill="none" stroke="#45484c" stroke-width="1.05"/></svg>
<div class="a" style="left:68.9px;top:401px;width:520px;height:7px;background:#fff"></div>
<div class="a" style="left:68.9px;top:401px;width:199.6px;height:7px;background:#acacac"></div>
<div class="a" style="left:589px;top:125px;width:7.5px;height:12.5px;background:#a5a5a5"></div>
<div class="a" style="left:32px;top:101.5px;width:1px;height:307px;background:#e6e8f0"></div>
<div class="a" style="left:588.5px;top:78px;width:8.5px;height:330px;background:linear-gradient(to right,rgba(0,0,0,0),rgba(0,0,0,0.012) 35%,rgba(0,0,0,0.11))"></div>

<!-- RIGHT PANEL -->
<div id="panel" class="a" style="left:596.8px;top:78px;width:339.2px;height:330px;background:#fff"></div>
<div class="a" style="left:596.8px;top:77.2px;width:339.2px;height:28.5px;background:#3f79ab;border-bottom:0.5px solid #3a70a0"></div>
<svg style="left:610.5px;top:82.5px" width="17" height="13"><rect x="0.55" y="0.55" width="10" height="9" rx="1" fill="none" stroke="#eef3f8" stroke-width="1.1"/><path d="M3.9 0.6V9.5M7.2 0.6V9.5M0.6 3.5H10.5M0.6 6.5H10.5" stroke="#eef3f8" stroke-width="1.1"/><path d="M6.8 4.4V10.4A4.3 1.7 0 0 0 15.4 10.4V4.4Z" fill="#3f79ab" stroke="#eef3f8" stroke-width="1.1"/><ellipse cx="11.1" cy="4.4" rx="4.3" ry="1.7" fill="#3f79ab" stroke="#eef3f8" stroke-width="1.1"/><path d="M6.8 6.8A4.3 1.7 0 0 0 15.4 6.8M6.8 8.7A4.3 1.7 0 0 0 15.4 8.7" fill="none" stroke="#eef3f8" stroke-width="1"/></svg>
<div class="t" style="left:644px;top:87px;font-size:10px;color:#fff;-webkit-text-stroke:0.2px #fff">Dataset Overview</div>
<div class="a" style="left:597px;top:106px;width:339px;height:35px;background:#eef3f8"></div>
<div class="t" style="left:620px;top:118.6px;font-size:12.5px;color:#36393d;letter-spacing:0.15px">CaliforniaEQ</div>
<svg style="left:705px;top:117.6px" width="11" height="11"><path d="M0.8 10.2L1.3 7.8 8 1.1 9.9 3 3.2 9.7Z M6.8 2.3L8.7 4.2" fill="none" stroke="#3f6a94" stroke-width="1.1"/></svg>
<div class="t" style="left:760px;top:111px;width:153.5px;text-align:right;font-size:12px;font-style:italic;color:#3f5f80">2000 rows</div>
<div class="t" style="left:760px;top:124.5px;width:153.5px;text-align:right;font-size:12px;font-style:italic;color:#4a4d50">14 columns</div>
<div class="a" style="left:620px;top:153px;width:293px;height:20px;border:1px solid #d5d8dc;background:#fff"></div>
<div class="t" style="left:626.5px;top:158.7px;font-size:10px;font-style:italic;color:#74777a">Search</div>
<svg style="left:894px;top:158px" width="13" height="12"><circle cx="4.8" cy="4.7" r="4" fill="none" stroke="#2b5a86" stroke-width="1.2"/><path d="M7.7 7.6L11.3 11" stroke="#2b5a86" stroke-width="1.5"/></svg>
<div class="a" style="left:620px;top:187px;width:292.5px;height:19px;border:1px solid #d9d9d9;border-radius:2px;background:#fff"></div>
<div class="a" style="left:620px;top:187px;width:146px;height:19px;border-radius:2px 0 0 2px;background:#2f5c87"></div>
<div class="t" style="left:620.5px;top:193px;width:146px;text-align:center;font-size:10px;color:#fff;-webkit-text-stroke:0.25px #fff;letter-spacing:0.12px">Output</div>
<div class="t" style="left:766px;top:193px;width:146.5px;text-align:center;font-size:10px;color:#3f5f80">Columns</div>

<svg style="left:615px;top:225px" width="11" height="7"><path d="M0.7 0.7L5.3 5.5 9.9 0.7" fill="none" stroke="#2b5a86" stroke-width="1.4"/></svg>
<div class="t" style="left:638px;top:222.5px;font-size:11.4px;color:#3c3f43">Measures (6)</div>
<svg style="left:851px;top:222px" width="26" height="13"><path d="M3.2 9.4V0.9M0.5 3.6L3.2 0.9 5.9 3.6M8.7 3.4V12.3M6 9.6L8.7 12.3 11.4 9.6" fill="none" stroke="#3f6a94" stroke-width="1.05"/><rect x="13.6" y="2" width="2.6" height="5.3" fill="none" stroke="#3f6a94" stroke-width="0.85"/><path d="M18.3 5.9L21.3 9.1 24.3 5.9" fill="none" stroke="#3f6a94" stroke-width="0.9"/></svg><svg style="left:851px;top:355.6px" width="26" height="13"><path d="M3.2 9.4V0.9M0.5 3.6L3.2 0.9 5.9 3.6M8.7 3.4V12.3M6 9.6L8.7 12.3 11.4 9.6" fill="none" stroke="#3f6a94" stroke-width="1.05"/><rect x="13.6" y="2" width="2.6" height="5.3" fill="none" stroke="#3f6a94" stroke-width="0.85"/><path d="M18.3 5.9L21.3 9.1 24.3 5.9" fill="none" stroke="#3f6a94" stroke-width="0.9"/></svg>
<svg style="left:887px;top:226.6px" width="13" height="4"><circle cx="1.6" cy="1.8" r="1.35" fill="#7d9ab8" stroke="#3f6a94" stroke-width="0.9"/><circle cx="6.2" cy="1.8" r="1.35" fill="#7d9ab8" stroke="#3f6a94" stroke-width="0.9"/><circle cx="10.8" cy="1.8" r="1.35" fill="#7d9ab8" stroke="#3f6a94" stroke-width="0.9"/></svg>

<div class="a" style="left:620px;top:253.50px;width:285px;height:20.8px;border:1px solid #dedede;border-radius:2.5px;background:#f5f5f5"></div>
<svg style="left:626.3px;top:257.90px" width="3" height="12"><circle cx="1.1" cy="1.1" r="0.95" fill="#2b5a86"/><circle cx="1.1" cy="4" r="0.95" fill="#2b5a86"/><circle cx="1.1" cy="7" r="0.95" fill="#2b5a86"/><circle cx="1.1" cy="10.1" r="0.95" fill="#2b5a86"/></svg>
<svg style="left:636.8px;top:258.80px" width="13" height="10"><rect x="0" y="0" width="11.6" height="1.7" fill="#3f6a94"/><path d="M0.7 1.5V3.5M2.9 1.5V3.5M5.1 1.5V3.5M7.3 1.5V3.5M9.5 1.5V3.5M11.2 1.5V3.2" stroke="#3f6a94" stroke-width="1.3"/><rect x="0" y="5.8" width="11.6" height="2.4" fill="#3f6a94"/><path d="M7.6 4.6L8.9 6.4H6.3Z" fill="#3f6a94"/><circle cx="7.6" cy="7.2" r="0.8" fill="#f5f5f5"/></svg>
<div class="t" style="left:657.5px;top:259.00px;font-size:11.5px;color:#3a6491">Magnitude</div>
<div class="t" style="left:820.5px;top:259.00px;font-size:11.3px;color:#8a8a8a">SUM</div>
<div class="a" style="left:620px;top:276.90px;width:285px;height:20.8px;border:1px solid #dedede;border-radius:2.5px;background:#f5f5f5"></div>
<svg style="left:626.3px;top:281.30px" width="3" height="12"><circle cx="1.1" cy="1.1" r="0.95" fill="#2b5a86"/><circle cx="1.1" cy="4" r="0.95" fill="#2b5a86"/><circle cx="1.1" cy="7" r="0.95" fill="#2b5a86"/><circle cx="1.1" cy="10.1" r="0.95" fill="#2b5a86"/></svg>
<svg style="left:636.8px;top:282.20px" width="13" height="10"><rect x="0" y="0" width="11.6" height="1.7" fill="#3f6a94"/><path d="M0.7 1.5V3.5M2.9 1.5V3.5M5.1 1.5V3.5M7.3 1.5V3.5M9.5 1.5V3.5M11.2 1.5V3.2" stroke="#3f6a94" stroke-width="1.3"/><rect x="0" y="5.8" width="11.6" height="2.4" fill="#3f6a94"/><path d="M7.6 4.6L8.9 6.4H6.3Z" fill="#3f6a94"/><circle cx="7.6" cy="7.2" r="0.8" fill="#f5f5f5"/></svg>
<div class="t" style="left:657.5px;top:282.40px;font-size:11.5px;color:#3a6491">Latitude</div>
<div class="t" style="left:820.5px;top:282.40px;font-size:11.3px;color:#8a8a8a">SUM</div>
<div class="a" style="left:620px;top:300.30px;width:285px;height:20.8px;border:1px solid #dedede;border-radius:2.5px;background:#f5f5f5"></div>
<svg style="left:626.3px;top:304.70px" width="3" height="12"><circle cx="1.1" cy="1.1" r="0.95" fill="#2b5a86"/><circle cx="1.1" cy="4" r="0.95" fill="#2b5a86"/><circle cx="1.1" cy="7" r="0.95" fill="#2b5a86"/><circle cx="1.1" cy="10.1" r="0.95" fill="#2b5a86"/></svg>
<svg style="left:636.8px;top:305.60px" width="13" height="10"><rect x="0" y="0" width="11.6" height="1.7" fill="#3f6a94"/><path d="M0.7 1.5V3.5M2.9 1.5V3.5M5.1 1.5V3.5M7.3 1.5V3.5M9.5 1.5V3.5M11.2 1.5V3.2" stroke="#3f6a94" stroke-width="1.3"/><rect x="0" y="5.8" width="11.6" height="2.4" fill="#3f6a94"/><path d="M7.6 4.6L8.9 6.4H6.3Z" fill="#3f6a94"/><circle cx="7.6" cy="7.2" r="0.8" fill="#f5f5f5"/></svg>
<div class="t" style="left:657.5px;top:305.80px;font-size:11.5px;color:#3a6491">Longitude</div>
<div class="t" style="left:820.5px;top:305.80px;font-size:11.3px;color:#8a8a8a">SUM</div>
<div class="a" style="left:620px;top:323.70px;width:285px;height:20.8px;border:1px solid #dedede;border-radius:2.5px;background:#f5f5f5"></div>
<svg style="left:626.3px;top:328.10px" width="3" height="12"><circle cx="1.1" cy="1.1" r="0.95" fill="#2b5a86"/><circle cx="1.1" cy="4" r="0.95" fill="#2b5a86"/><circle cx="1.1" cy="7" r="0.95" fill="#2b5a86"/><circle cx="1.1" cy="10.1" r="0.95" fill="#2b5a86"/></svg>
<svg style="left:636.8px;top:329.00px" width="13" height="10"><rect x="0" y="0" width="11.6" height="1.7" fill="#3f6a94"/><path d="M0.7 1.5V3.5M2.9 1.5V3.5M5.1 1.5V3.5M7.3 1.5V3.5M9.5 1.5V3.5M11.2 1.5V3.2" stroke="#3f6a94" stroke-width="1.3"/><rect x="0" y="5.8" width="11.6" height="2.4" fill="#3f6a94"/><path d="M7.6 4.6L8.9 6.4H6.3Z" fill="#3f6a94"/><circle cx="7.6" cy="7.2" r="0.8" fill="#f5f5f5"/></svg>
<div class="t" style="left:657.5px;top:329.20px;font-size:11.5px;color:#3a6491">Depth (Km)</div>
<div class="t" style="left:820.5px;top:329.20px;font-size:11.3px;color:#8a8a8a">SUM</div>

<div class="a" style="left:597px;top:344px;width:331px;height:1px;background:#e5e5e5"></div>
<svg style="left:615px;top:359px" width="11" height="7"><path d="M0.7 0.7L5.3 5.5 9.9 0.7" fill="none" stroke="#2b5a86" stroke-width="1.4"/></svg>
<div class="t" style="left:638px;top:356.5px;font-size:11.4px;color:#3c3f43">Dimensions (8)</div>
<svg style="left:887px;top:360.1px" width="13" height="4"><circle cx="1.6" cy="1.8" r="1.35" fill="#7d9ab8" stroke="#3f6a94" stroke-width="0.9"/><circle cx="6.2" cy="1.8" r="1.35" fill="#7d9ab8" stroke="#3f6a94" stroke-width="0.9"/><circle cx="10.8" cy="1.8" r="1.35" fill="#7d9ab8" stroke="#3f6a94" stroke-width="0.9"/></svg>
<div class="a" style="left:597px;top:378.5px;width:339px;height:1px;background:#dcdcdc"></div>
<div class="a" style="left:820px;top:384.5px;width:104.5px;height:19px;border:1px solid #b9cadb;border-radius:2px;background:#fff"></div>
<div class="t" style="left:820px;top:389.5px;width:104.5px;text-align:center;font-size:10px;color:#3f5f80">Validate Full Dataset</div>

<!-- right scrollbar -->
<div class="a" style="left:926px;top:77.2px;width:10px;height:331px;background:linear-gradient(to right,rgba(0,0,0,0),rgba(0,0,0,0.09))"></div>
<div class="a" style="left:928px;top:211px;width:8px;height:64px;background:#a8a8a8"></div>

</div>
</body></html>
